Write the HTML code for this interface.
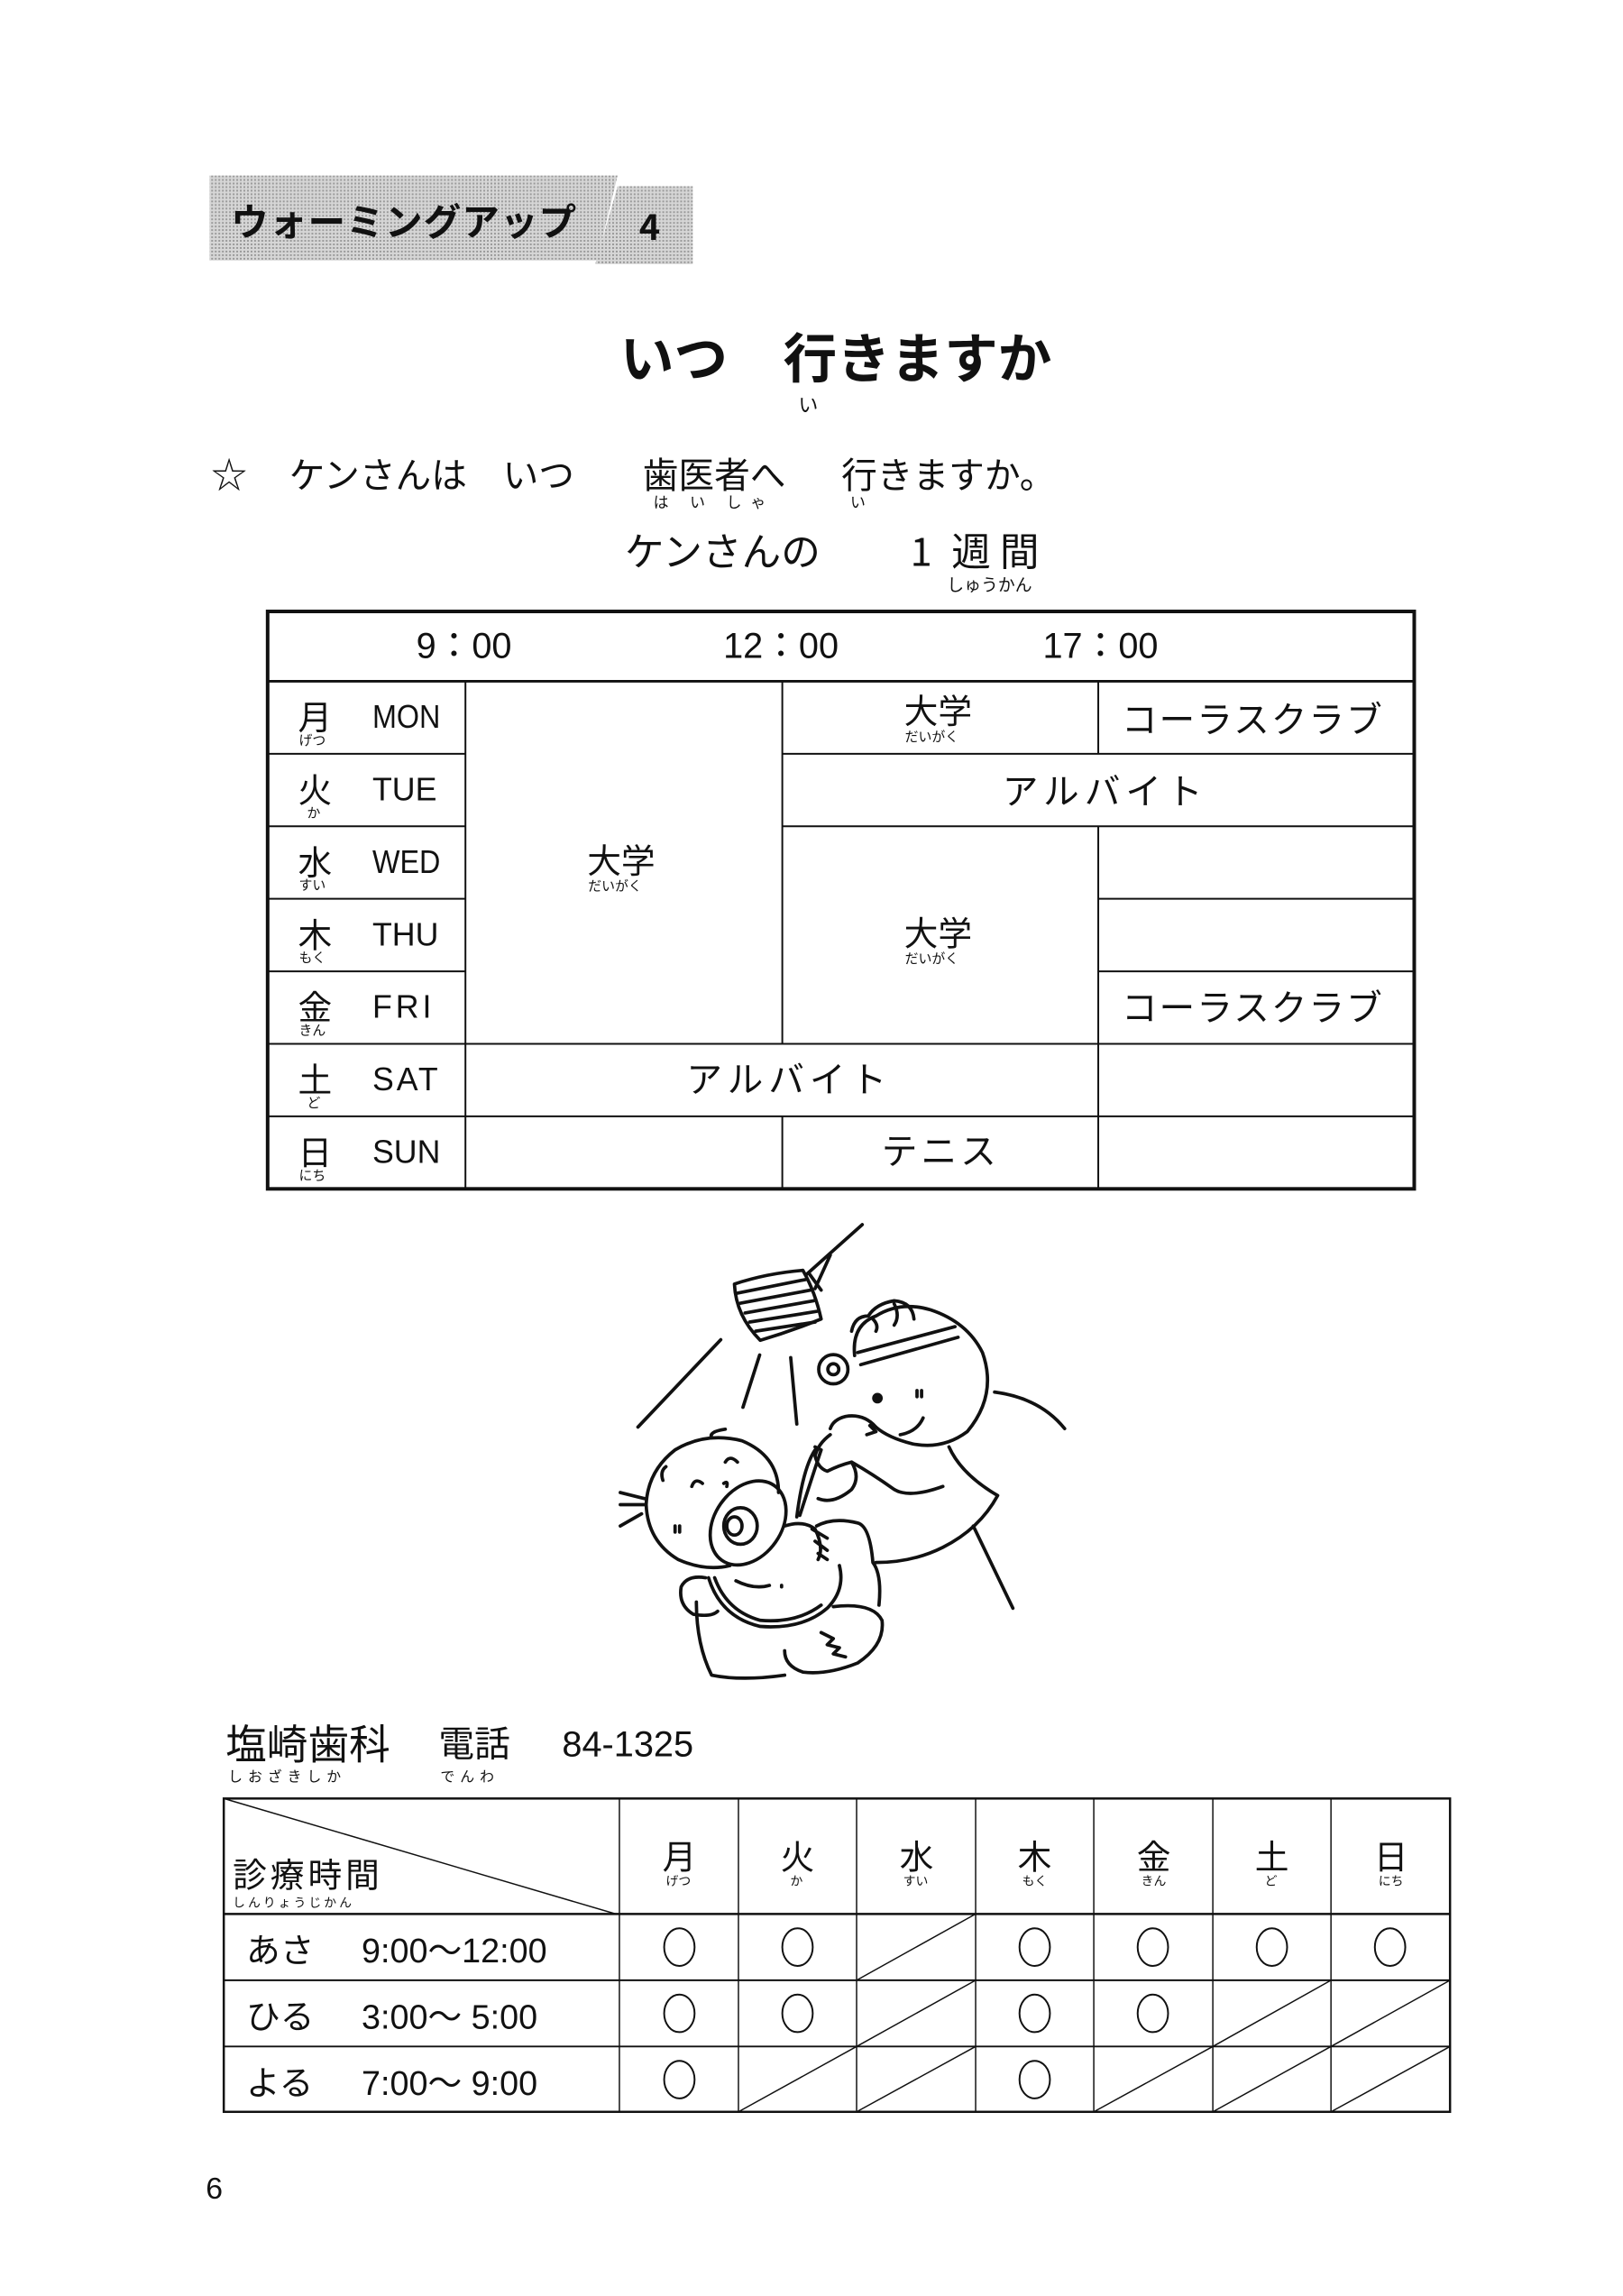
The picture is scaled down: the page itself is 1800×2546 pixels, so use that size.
<!DOCTYPE html>
<html><head><meta charset="utf-8"><style>
html,body{margin:0;padding:0;background:#fff}
svg{display:block}
text{font-family:"Liberation Sans","Noto Sans CJK JP",sans-serif;fill:#111}
.j{font-family:"Noto Sans CJK JP","WenQuanYi Zen Hei",sans-serif}
</style></head><body>
<svg width="1800" height="2546" viewBox="0 0 1800 2546" xmlns="http://www.w3.org/2000/svg">
<defs>
<pattern id="ht" width="4" height="4" patternUnits="userSpaceOnUse">
<rect width="4" height="4" fill="#d6d6d6"/><rect width="2" height="2" fill="#9a9a9a"/>
</pattern>
</defs>
<g transform="scale(0.9927)">
<!-- header banner -->
<polygon points="234,196 690,196 667,291 234,291" fill="url(#ht)"/>
<polygon points="690,208 774,208 774,295 665,295" fill="url(#ht)"/>
<text x="258" y="263" class="j" font-size="42" font-weight="bold" letter-spacing="1">ウォーミングアップ</text>
<text x="714" y="268" class="j" font-size="40" font-weight="bold">4</text>

<!-- title -->
<text x="693" y="422" class="j" font-size="60" font-weight="bold">いつ</text>
<text x="875" y="422" class="j" font-size="60" font-weight="bold">行きますか</text>
<text x="892" y="460" class="j" font-size="22">い</text>

<!-- question -->
<text x="236" y="545" class="j" font-size="40">☆</text>
<text x="323" y="545" class="j" font-size="40">ケンさんは　いつ</text>
<text x="718" y="545" class="j" font-size="40">歯医者へ</text>
<text x="940" y="545" class="j" font-size="40">行きますか。</text>
<text x="730" y="567" class="j" font-size="17" letter-spacing="10">は い しゃ</text>
<text x="950" y="567" class="j" font-size="17">い</text>

<text x="698" y="632" class="j" font-size="44">ケンさんの</text>
<text x="1017" y="632" class="j" font-size="44">1</text>
<text x="1063" y="632" class="j" font-size="44" letter-spacing="10">週間</text>
<text x="1058" y="660" class="j" font-size="19">しゅうかん</text>

<!-- schedule table -->
<g stroke="#111" fill="none">
<rect x="299" y="683" width="1281" height="645" stroke-width="4"/>
<line x1="299" y1="761" x2="1580" y2="761" stroke-width="3"/>
<line x1="520" y1="761" x2="520" y2="1328" stroke-width="2"/>
<line x1="874" y1="761" x2="874" y2="1166" stroke-width="2"/>
<line x1="874" y1="1247" x2="874" y2="1328" stroke-width="2"/>
<line x1="1227" y1="761" x2="1227" y2="842" stroke-width="2"/>
<line x1="1227" y1="923" x2="1227" y2="1328" stroke-width="2"/>
<line x1="299" y1="842" x2="520" y2="842" stroke-width="2"/>
<line x1="299" y1="923" x2="520" y2="923" stroke-width="2"/>
<line x1="299" y1="1004" x2="520" y2="1004" stroke-width="2"/>
<line x1="299" y1="1085" x2="520" y2="1085" stroke-width="2"/>
<line x1="299" y1="1166" x2="520" y2="1166" stroke-width="2"/>
<line x1="299" y1="1247" x2="1580" y2="1247" stroke-width="2"/>
<line x1="520" y1="1166" x2="1580" y2="1166" stroke-width="2"/>
<line x1="874" y1="842" x2="1580" y2="842" stroke-width="2"/>
<line x1="874" y1="923" x2="1580" y2="923" stroke-width="2"/>
<line x1="1227" y1="1004" x2="1580" y2="1004" stroke-width="2"/>
<line x1="1227" y1="1085" x2="1580" y2="1085" stroke-width="2"/>
</g>
<g class="j">
<text x="465" y="735" font-size="40">9：00</text>
<text x="808" y="735" font-size="40">12：00</text>
<text x="1165" y="735" font-size="40">17：00</text>
</g>
<g class="j" font-size="38">
<text x="333" y="815">月</text><text x="333" y="896">火</text><text x="333" y="977">水</text><text x="333" y="1058">木</text><text x="333" y="1139">金</text><text x="333" y="1220">土</text><text x="333" y="1301">日</text>
</g>
<g class="j" font-size="15">
<text x="334" y="832">げつ</text><text x="343" y="913">か</text><text x="334" y="994">すい</text><text x="334" y="1075">もく</text><text x="334" y="1156">きん</text><text x="343" y="1237">ど</text><text x="334" y="1318">にち</text>
</g>
<g font-family="Liberation Serif,serif" font-size="36">
<text x="416" y="813" textLength="76" lengthAdjust="spacingAndGlyphs">MON</text>
<text x="416" y="894">TUE</text>
<text x="416" y="975" textLength="76" lengthAdjust="spacingAndGlyphs">WED</text>
<text x="416" y="1056">THU</text>
<text x="416" y="1137" letter-spacing="4">FRI</text>
<text x="416" y="1218" letter-spacing="3">SAT</text>
<text x="416" y="1299">SUN</text>
</g>
<g class="j">
<text x="656" y="975" font-size="38">大学</text><text x="657" y="995" font-size="15">だいがく</text>
<text x="1010" y="808" font-size="38">大学</text><text x="1011" y="828" font-size="15">だいがく</text>
<text x="1010" y="1056" font-size="38">大学</text><text x="1011" y="1076" font-size="15">だいがく</text>
<text x="1253" y="818" font-size="40" letter-spacing="2">コーラスクラブ</text>
<text x="1253" y="1140" font-size="40" letter-spacing="2">コーラスクラブ</text>
<text x="1120" y="898" font-size="40" letter-spacing="6">アルバイト</text>
<text x="767" y="1220" font-size="40" letter-spacing="6">アルバイト</text>
<text x="985" y="1300" font-size="40" letter-spacing="4">テニス</text>
</g>

<!-- illustration -->
<g transform="translate(693,1368) scale(0.34)" stroke="#111" stroke-width="11" fill="none" stroke-linecap="round" stroke-linejoin="round">
<path d="M795,0 L610,165 M690,100 L640,210 M620,160 L660,215"/>
<path d="M375,195 Q480,160 600,150 Q640,220 660,310 Q560,350 460,380 Q380,300 375,195 Z"/>
<path d="M385,225 L610,180 M395,258 L625,215 M410,290 L635,250 M425,320 L645,285 M445,350 L640,320"/>
<path d="M330,378 L58,665 M458,428 L403,600 M560,437 L580,655"/>
<path d="M770,430 Q760,330 840,300 Q920,250 1020,280 Q1140,320 1190,420 Q1240,560 1140,680 Q1060,740 960,720 Q880,700 840,665"/>
<path d="M760,350 Q770,300 815,300 Q840,260 900,250 Q960,255 965,310 M830,310 Q850,330 840,350 M900,260 Q920,300 900,330"/>
<path d="M780,420 L1100,335 M790,460 L1110,370"/>
<circle cx="700" cy="475" r="48"/><circle cx="700" cy="475" r="18"/>
<circle cx="845" cy="570" r="12" fill="#111"/>
<path d="M975,545 L975,565 M990,545 L990,565"/>
<path d="M920,690 Q975,680 995,635"/>
<path d="M840,665 Q800,620 740,630 Q700,640 690,670 M820,660 L840,680 L810,690"/>
<path d="M1230,550 Q1380,570 1460,670 M1080,730 Q1120,820 1240,890 Q1180,1000 1060,1060 Q960,1110 840,1110"/>
<path d="M1160,990 L1290,1260"/>
<path d="M690,690 Q650,720 640,760 Q650,800 680,810 Q720,790 760,780 Q790,830 760,870 Q700,920 650,900"/>
<path d="M640,740 Q600,800 580,960 M660,740 Q630,830 590,955 M640,730 L660,740"/>
<path d="M760,780 Q830,820 900,870 Q950,900 1060,860"/>
<path d="M645,990 Q700,960 780,980 Q820,990 830,1110 Q860,1150 850,1250"/>
<path d="M520,880 Q520,760 400,710 Q280,680 180,740 Q90,810 85,920 Q90,1040 190,1100 Q280,1140 360,1120"/>
<path d="M300,700 Q290,680 345,672"/>
<path d="M345,780 Q360,755 385,780 M235,860 Q245,830 270,850 M340,850 Q355,840 350,860"/>
<path d="M150,795 Q130,810 140,840"/>
<path d="M180,990 L180,1010 M195,990 L195,1010"/>
<path d="M0,880 L80,900 M0,920 L80,920 M0,990 L70,950"/>
<ellipse cx="420" cy="980" rx="110" ry="150" transform="rotate(35 420 980)"/>
<ellipse cx="395" cy="990" rx="55" ry="60"/>
<ellipse cx="375" cy="990" rx="25" ry="30"/>
<path d="M540,990 Q600,970 640,1000 Q670,1060 650,1100 M630,1000 L680,1030 M640,1040 L680,1070 M650,1080 L680,1100"/>
<path d="M290,1160 Q330,1290 460,1320 Q600,1330 680,1260 Q740,1200 720,1120"/>
<path d="M310,1160 Q350,1270 460,1300 Q580,1310 660,1250"/>
<path d="M380,1170 Q440,1200 490,1185 M530,1185 L530,1190"/>
<path d="M280,1160 Q220,1150 200,1190 Q190,1250 240,1280 Q300,1290 320,1270"/>
<path d="M250,1240 Q250,1380 300,1480 Q400,1500 540,1480"/>
<path d="M700,1255 Q830,1240 860,1300 Q870,1380 780,1440 Q680,1480 600,1470 Q540,1450 540,1400"/>
<path d="M660,1340 L700,1360 L680,1380 L720,1390 L700,1410 L740,1420"/>
</g>

<!-- clinic -->
<text x="252" y="1965" class="j" font-size="46">塩崎歯科</text>
<text x="490" y="1962" class="j" font-size="40">電話</text>
<text x="628" y="1962" font-size="40">84-1325</text>
<text x="255" y="1990" class="j" font-size="16" letter-spacing="6">しおざきしか</text>
<text x="492" y="1990" class="j" font-size="16" letter-spacing="6">でんわ</text>

<g stroke="#111" fill="none">
<rect x="250" y="2009" width="1370" height="350" stroke-width="2.5"/>
<line x1="250" y1="2138" x2="1620" y2="2138" stroke-width="2.5"/>
<line x1="250" y1="2212" x2="1620" y2="2212" stroke-width="2"/>
<line x1="250" y1="2286" x2="1620" y2="2286" stroke-width="2"/>
<line x1="692" y1="2009" x2="692" y2="2359" stroke-width="1.5"/>
<line x1="825" y1="2009" x2="825" y2="2359" stroke-width="1.5"/>
<line x1="957" y1="2009" x2="957" y2="2359" stroke-width="1.5"/>
<line x1="1090" y1="2009" x2="1090" y2="2359" stroke-width="1.5"/>
<line x1="1222" y1="2009" x2="1222" y2="2359" stroke-width="1.5"/>
<line x1="1355" y1="2009" x2="1355" y2="2359" stroke-width="1.5"/>
<line x1="1487" y1="2009" x2="1487" y2="2359" stroke-width="1.5"/>
<line x1="250" y1="2009" x2="688" y2="2138" stroke-width="1.5"/>
<line x1="957" y1="2212" x2="1090" y2="2138" stroke-width="1.5"/>
<line x1="957" y1="2286" x2="1090" y2="2212" stroke-width="1.5"/>
<line x1="1355" y1="2286" x2="1487" y2="2212" stroke-width="1.5"/>
<line x1="1487" y1="2286" x2="1620" y2="2212" stroke-width="1.5"/>
<line x1="825" y1="2359" x2="957" y2="2286" stroke-width="1.5"/>
<line x1="957" y1="2359" x2="1090" y2="2286" stroke-width="1.5"/>
<line x1="1222" y1="2359" x2="1355" y2="2286" stroke-width="1.5"/>
<line x1="1355" y1="2359" x2="1487" y2="2286" stroke-width="1.5"/>
<line x1="1487" y1="2359" x2="1620" y2="2286" stroke-width="1.5"/>
<g stroke-width="2">
<ellipse cx="759" cy="2175" rx="17" ry="21"/><ellipse cx="891" cy="2175" rx="17" ry="21"/><ellipse cx="1156" cy="2175" rx="17" ry="21"/><ellipse cx="1288" cy="2175" rx="17" ry="21"/><ellipse cx="1421" cy="2175" rx="17" ry="21"/><ellipse cx="1553" cy="2175" rx="17" ry="21"/>
<ellipse cx="759" cy="2249" rx="17" ry="21"/><ellipse cx="891" cy="2249" rx="17" ry="21"/><ellipse cx="1156" cy="2249" rx="17" ry="21"/><ellipse cx="1288" cy="2249" rx="17" ry="21"/>
<ellipse cx="759" cy="2323" rx="17" ry="21"/><ellipse cx="1156" cy="2323" rx="17" ry="21"/>
</g>
</g>
<g class="j">
<text x="260" y="2108" font-size="38" letter-spacing="4">診療時間</text>
<text x="260" y="2130" font-size="14" letter-spacing="3">しんりょうじかん</text>
<g font-size="38">
<text x="740" y="2088">月</text><text x="872" y="2088">火</text><text x="1005" y="2088">水</text><text x="1137" y="2088">木</text><text x="1270" y="2088">金</text><text x="1402" y="2088">土</text><text x="1535" y="2088">日</text>
</g>
<g font-size="14">
<text x="744" y="2106">げつ</text><text x="883" y="2106">か</text><text x="1009" y="2106">すい</text><text x="1142" y="2106">もく</text><text x="1275" y="2106">きん</text><text x="1413" y="2106">ど</text><text x="1540" y="2106">にち</text>
</g>
<g font-size="38">
<text x="275" y="2192">あさ</text><text x="404" y="2192">9:00～12:00</text>
<text x="275" y="2266">ひる</text><text x="404" y="2266">3:00～ 5:00</text>
<text x="275" y="2340">よる</text><text x="404" y="2340">7:00～ 9:00</text>
</g>
</g>
<text x="230" y="2456" font-size="34">6</text>
</g>
</svg>
</body></html>
